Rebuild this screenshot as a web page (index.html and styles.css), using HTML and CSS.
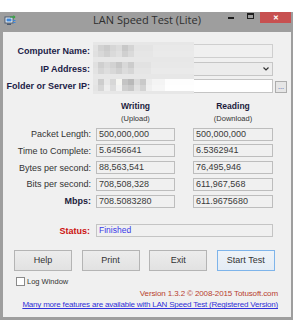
FILE: index.html
```html
<!DOCTYPE html>
<html lang="en">
<head>
    <meta charset="UTF-8">
    <meta name="viewport" content="width=device-width, initial-scale=1.0">
    <title>LAN Speed Test (Lite)</title>
    <link rel="stylesheet" href="styles.css">
</head>
<body>
    <div class="window">
        <div class="titlebar">
            <svg class="app-icon" width="12" height="12" viewBox="0 0 12 12">
                <rect x="1" y="3" width="8" height="6" fill="#f4f4f4" stroke="#4a5a70" stroke-width="1"/>
                <rect x="2.5" y="4.5" width="5" height="3" fill="#3d86d8"/>
                <rect x="3" y="9.5" width="4" height="1.5" fill="#4a5a70"/>
                <path d="M6 2.5 L9.5 2.5 L9.5 1 L11.5 3 L9.5 5 L9.5 3.5 L6 3.5 Z" fill="#2fa83a"/>
                <rect x="9" y="6" width="2.5" height="1" fill="#3d86d8"/>
                <rect x="9" y="8" width="2.5" height="1" fill="#3d86d8"/>
            </svg>
            <span class="title">LAN Speed Test (Lite)</span>
            <div class="controls">
                <span class="min"></span>
                <span class="max"></span>
                <span class="close">&#x2715;</span>
            </div>
        </div>

        <div class="client">
            <div class="target">
                <label class="tlabel">Computer Name:</label>
                <div class="field readonly"></div>
                <span></span>

                <label class="tlabel">IP Address:</label>
                <div class="field select">
                    <svg class="chevron" width="6" height="4" viewBox="0 0 6 4">
                        <path d="M0.5 0.5 L3 3 L5.5 0.5" fill="none" stroke="#333" stroke-width="1.2"/>
                    </svg>
                </div>
                <span></span>

                <label class="tlabel">Folder or Server IP:</label>
                <div class="field white"></div>
                <button class="browse">...</button>

                <div class="mosaic">
                    <div class="tiles t1"></div>
                    <div class="tiles t2"></div>
                    <div class="tiles t3"></div>
                </div>
            </div>

            <div class="stats">
                <div class="stat-row head-row">
                    <span class="stat-label"></span>
                    <div class="head w">Writing<small>(Upload)</small></div>
                    <div class="head r">Reading<small>(Download)</small></div>
                </div>
                <div class="stat-row">
                    <span class="stat-label">Packet Length:</span>
                    <div class="stat-box w">500,000,000</div>
                    <div class="stat-box r">500,000,000</div>
                </div>
                <div class="stat-row">
                    <span class="stat-label">Time to Complete:</span>
                    <div class="stat-box w">5.6456641</div>
                    <div class="stat-box r">6.5362941</div>
                </div>
                <div class="stat-row">
                    <span class="stat-label">Bytes per second:</span>
                    <div class="stat-box w">88,563,541</div>
                    <div class="stat-box r">76,495,946</div>
                </div>
                <div class="stat-row">
                    <span class="stat-label">Bits per second:</span>
                    <div class="stat-box w">708,508,328</div>
                    <div class="stat-box r">611,967,568</div>
                </div>
                <div class="stat-row">
                    <span class="stat-label bold">Mbps:</span>
                    <div class="stat-box w">708.5083280</div>
                    <div class="stat-box r">611.9675680</div>
                </div>
            </div>

            <div class="status-row">
                <span class="status-label">Status:</span>
                <div class="status-box">Finished</div>
            </div>

            <div class="buttons">
                <button class="btn">Help</button>
                <button class="btn">Print</button>
                <button class="btn">Exit</button>
                <button class="btn default">Start Test</button>
            </div>

            <label class="log"><span class="check"></span>Log Window</label>

            <div class="version">Version 1.3.2 &copy; 2008-2015 Totusoft.com</div>
            <div class="upgrade"><a href="#">Many more features are available with LAN Speed Test (Registered Version)</a></div>
        </div>
    </div>
</body>
</html>
```

FILE: styles.css
```css
body {
    margin: 0;
    padding: 0;
    background: #fff;
    font-family: "Liberation Sans", Arial, sans-serif;
    font-size: 9px;
    color: #333;
}

.window {
    margin-top: 12px;
    height: 308px;
    box-sizing: border-box;
    background: #9e9e9e;
    padding: 0 2px 3px 3px;
    display: flex;
    flex-direction: column;
}

/* title bar */
.titlebar {
    height: 20px;
    flex-shrink: 0;
    display: grid;
    grid-template-columns: 1fr auto 1fr;
    align-items: start;
}

.app-icon {
    margin: 2px 0 0 1px;
}

.title {
    font-family: "Open Sans", "Liberation Sans", sans-serif;
    font-size: 11px;
    line-height: 16px;
    color: #2e2e2e;
}

.controls {
    justify-self: end;
    display: flex;
    align-items: flex-start;
}

.min {
    width: 6px;
    height: 2px;
    background: #1e1e1e;
    margin: 5px 13px 0 0;
}

.max {
    width: 5px;
    height: 3px;
    border: 1px solid #1e1e1e;
    border-top-width: 2px;
    margin: 1px 6px 0 0;
}

.close {
    width: 31px;
    height: 11px;
    background: #c75050;
    color: #fff;
    font-size: 7px;
    font-weight: bold;
    line-height: 11px;
    text-align: center;
}

/* client area */
.client {
    flex: 1;
    background: #f0f0f0;
    padding-top: 12.3px;
}

.target {
    position: relative;
    display: grid;
    grid-template-columns: 87px 180px 12px;
    grid-auto-rows: 14px;
    column-gap: 3px;
    row-gap: 3.5px;
    align-items: center;
}

.tlabel {
    text-align: right;
    font-weight: bold;
    color: #1c1c48;
}

.field {
    height: 14px;
    box-sizing: border-box;
    border: 1px solid #cfcfcf;
    background: #f0f0f0;
}

.field.select {
    background: #ececec;
    border-color: #c6c6c6;
    display: flex;
    align-items: center;
    justify-content: flex-end;
}

.chevron {
    margin-right: 3px;
}

.field.white {
    background: #fff;
    border-color: #c4c4c4;
}

.browse {
    align-self: end;
    width: 12px;
    height: 12.5px;
    margin-left: -1px;
    padding: 0;
    border: 1px solid #adadad;
    background: #e6e6e6;
    font-family: "Liberation Sans", Arial, sans-serif;
    font-size: 7px;
    line-height: 6px;
    color: #1f3f9f;
}

/* blurred-out host details */
.mosaic {
    position: absolute;
    left: 90px;
    top: -2.5px;
    width: 101px;
    height: 52px;
    background: #e7e7e7;
    display: flex;
    flex-direction: column;
    justify-content: space-between;
    padding: 3px 0;
    box-sizing: border-box;
}

.tiles {
    height: 12px;
    background-size: 100% 50%;
    background-repeat: no-repeat;
    background-position: top, bottom;
}

.t1 {
    background-image:
        linear-gradient(90deg, #e2e2e2 0 5px, #d2d2d2 5px 11px, #cbcbcb 11px 17px, #d6d6d6 17px 23px, #dcdcdc 23px 29px, #c8c8c8 29px 35px, #d4d4d4 35px 41px, #e4e4e4 41px 60px, #e9e9e9 60px),
        linear-gradient(90deg, #e0e0e0 0 5px, #d8d8d8 5px 11px, #d0d0d0 11px 17px, #dadada 17px 23px, #e0e0e0 23px 29px, #d0d0d0 29px 35px, #dadada 35px 41px, #e6e6e6 41px 60px, #eaeaea 60px);
}

.t2 {
    background-image:
        linear-gradient(90deg, #e0e0e0 0 5px, #cfcfcf 5px 11px, #d9d9d9 11px 17px, #d2d2d2 17px 23px, #c6c6c6 23px 29px, #d8d8d8 29px 35px, #cccccc 35px 41px, #e2e2e2 41px 58px, #e8e8e8 58px),
        linear-gradient(90deg, #e3e3e3 0 5px, #d6d6d6 5px 11px, #dedede 11px 17px, #d8d8d8 17px 23px, #d0d0d0 23px 29px, #dcdcdc 29px 35px, #d6d6d6 35px 41px, #e5e5e5 41px 58px, #eaeaea 58px);
}

.t3 {
    background-image:
        linear-gradient(90deg, #e6e6e6 0 5px, #cdcdcd 5px 11px, #e8e8e8 11px 17px, #d7d7d7 17px 23px, #f6f6f2 23px 29px, #c4c4c4 29px 35px, #b9b9b9 35px 41px, #dadada 41px 47px, #c9c9c9 47px 53px, #ededed 53px 59px, #f4f4f4 59px 72px, #fdfdfd 72px),
        linear-gradient(90deg, #e4e4e4 0 5px, #d6d6d6 5px 11px, #eeeeee 11px 17px, #dddddd 17px 23px, #f2f2f2 23px 29px, #cfcfcf 29px 35px, #c8c8c8 35px 41px, #e2e2e2 41px 47px, #d3d3d3 47px 53px, #f0f0f0 53px 59px, #f6f6f6 59px 72px, #fefefe 72px);
}

/* results */
.stats {
    margin-top: 8px;
}

.stat-row {
    display: flex;
    align-items: center;
    height: 13px;
    margin-top: 3.75px;
}

.head-row {
    height: auto;
    margin-top: 0;
    margin-bottom: -1.5px;
}

.stat-label {
    width: 88px;
    text-align: right;
    color: #333;
}

.stat-label.bold {
    font-weight: bold;
    color: #1c1c3c;
}

.stat-box {
    width: 79px;
    height: 13px;
    margin-left: 5px;
    box-sizing: border-box;
    border: 1px solid #bdbdbd;
    padding-left: 2px;
    line-height: 11px;
    color: #3a3a3a;
}

.stat-box.r,
.head.r {
    width: 80px;
    margin-left: 18px;
}

.head {
    width: 79px;
    margin-left: 5px;
    text-align: center;
    font-weight: bold;
    font-size: 8.5px;
    line-height: 11px;
    color: #1c1c3c;
}

.head small {
    display: block;
    font-weight: normal;
    font-size: 7.5px;
    line-height: 13px;
    color: #333;
}

/* status */
.status-row {
    display: flex;
    align-items: center;
    margin-top: 16.3px;
}

.status-label {
    width: 87px;
    text-align: right;
    font-weight: bold;
    color: #cc1010;
}

.status-box {
    width: 177px;
    height: 13.5px;
    margin-left: 6px;
    box-sizing: border-box;
    border: 1px solid #c4c4c4;
    padding-left: 2px;
    line-height: 11.5px;
    font-size: 8.5px;
    color: #3a3ae8;
}

/* buttons */
.buttons {
    display: flex;
    gap: 9.6px;
    padding-left: 11px;
    margin-top: 12.3px;
}

.btn {
    width: 58px;
    height: 21.7px;
    padding: 0;
    border: 1px solid #b4b4b4;
    background: linear-gradient(#ececec, #e2e2e2);
    font-family: "Liberation Sans", Arial, sans-serif;
    font-size: 9px;
    color: #333;
}

.btn.default {
    border-color: #7eb4ea;
    background: linear-gradient(#eef3f8, #e4ecf5);
}

.log {
    display: flex;
    align-items: center;
    margin: 5.3px 0 0 13px;
    height: 9px;
    font-size: 7.5px;
    color: #333;
}

.check {
    width: 9px;
    height: 9px;
    box-sizing: border-box;
    border: 1px solid #8a8a8a;
    background: #fff;
    margin-right: 2px;
}

.version {
    margin-top: 2.8px;
    padding-right: 13px;
    text-align: right;
    line-height: 11px;
    font-size: 8px;
    letter-spacing: -0.12px;
    color: #b8402e;
}

.upgrade {
    padding-right: 13px;
    text-align: right;
    white-space: nowrap;
    line-height: 11px;
    font-size: 8px;
    letter-spacing: -0.2px;
}

.upgrade a {
    color: #3030d8;
}
```
